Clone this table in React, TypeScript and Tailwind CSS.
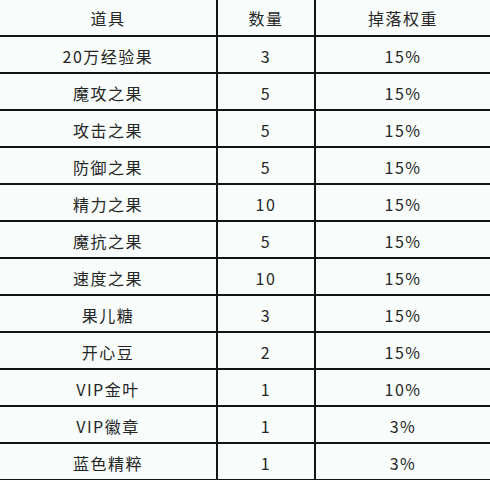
const rows: [string, string, string][] = [
  ['20万经验果', '3', '15%'],
  ['魔攻之果', '5', '15%'],
  ['攻击之果', '5', '15%'],
  ['防御之果', '5', '15%'],
  ['精力之果', '10', '15%'],
  ['魔抗之果', '5', '15%'],
  ['速度之果', '10', '15%'],
  ['果儿糖', '3', '15%'],
  ['开心豆', '2', '15%'],
  ['VIP金叶', '1', '10%'],
  ['VIP徽章', '1', '3%'],
  ['蓝色精粹', '1', '3%'],
]

function Row({ cells, first }: { cells: [string, string, string]; first?: boolean }) {
  return (
    <div className="grid grid-cols-[216px_98px_176px] border-b-2 border-[#141414]">
      {cells.map((c, i) => (
        <div
          key={i}
          className={[
            'flex items-center justify-center tracking-[1.5px] text-[16px] text-[#262626]',
            first ? 'h-[35px]' : 'h-[35px] pt-[2px]',
            i > 0 ? 'border-l-2 border-[#141414]' : '',
          ].join(' ')}
        >
          {c}
        </div>
      ))}
    </div>
  )
}

export default function App() {
  return (
    <div
      className="w-[490px] h-[480px] overflow-hidden bg-[#f8fdfb]"
      style={{ fontFamily: '"Noto Sans CJK SC", "Noto Sans", sans-serif' }}
    >
      <Row cells={['道具', '数量', '掉落权重']} first />
      {rows.map((r, i) => (
        <Row key={i} cells={r} />
      ))}
    </div>
  )
}
